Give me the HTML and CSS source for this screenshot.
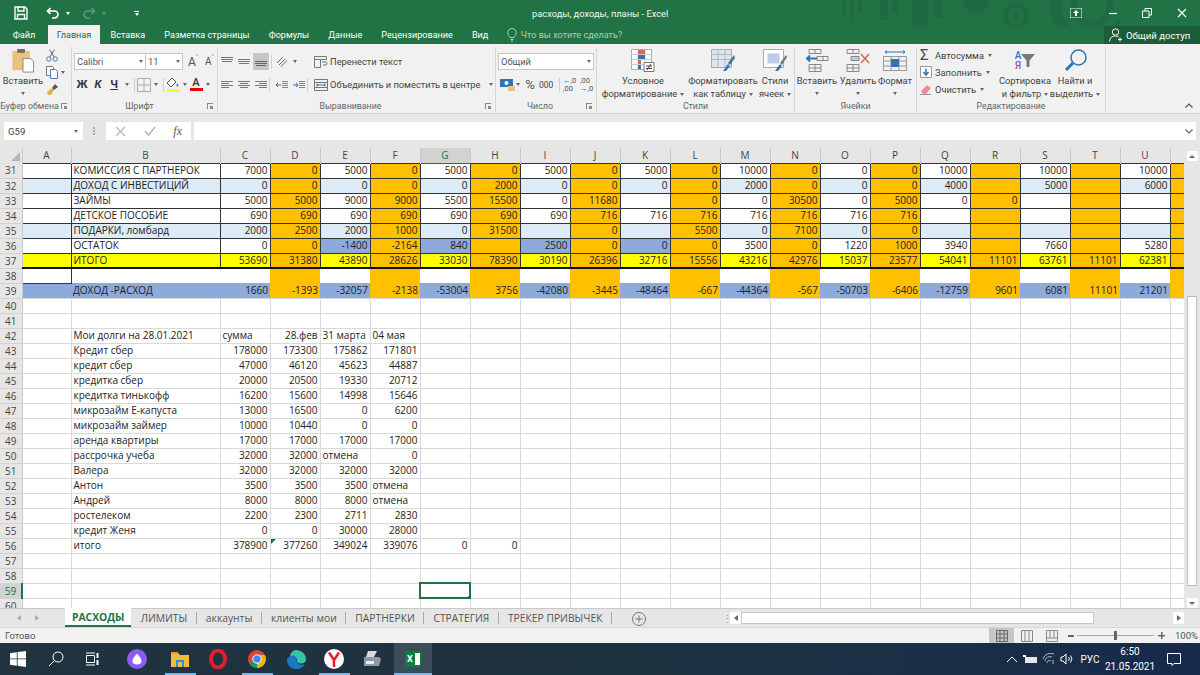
FILE: index.html
```html
<!DOCTYPE html>
<html lang="ru">
<head>
<meta charset="utf-8">
<title>расходы, доходы, планы - Excel</title>
<link rel="stylesheet" href="styles.css">
</head>
<body>
<div class="app">

<header class="titlebar">
  <svg class="pattern" width="290" height="44" viewBox="0 0 290 44" fill="#1f6a41">
    <rect x="12" width="3" height="16"/><rect x="20" width="3" height="22"/><rect x="28" width="3" height="12"/>
    <rect x="50" width="8" height="20"/><rect x="62" width="6" height="14"/><rect x="82" width="16" height="29"/>
    <rect x="104" width="8" height="18"/><circle cx="146" cy="0" r="13"/>
    <circle cx="186" cy="16" r="11" fill="none" stroke="#1f6a41" stroke-width="5"/><circle cx="186" cy="16" r="3"/>
    <circle cx="262" cy="6" r="36" fill="none" stroke="#1f6a41" stroke-width="12"/>
    <circle cx="262" cy="6" r="18" fill="none" stroke="#1f6a41" stroke-width="6"/>
  </svg>
  <div class="qat">
    <svg class="q-save" width="14" height="14" viewBox="0 0 14 14" fill="none" stroke="#fff" stroke-width="1.4"><path d="M1 1h10l2 2v10H1zM4 1v4h6V1M3.500 13V8.500h7V13"/></svg>
    <svg class="q-undo" width="14" height="12" viewBox="0 0 14 12" fill="none" stroke="#fff" stroke-width="1.700"><path d="M4.500 1 1.500 4l3 3M2 4h6.500a3.500 3.500 0 0 1 0 7H6"/></svg>
    <i class="caret white"></i>
    <svg class="q-redo" width="14" height="12" viewBox="0 0 14 12" fill="none" stroke="#5b9a78" stroke-width="1.700"><path d="M9.500 1l3 3-3 3M12 4H5.500a3.500 3.500 0 0 0 0 7H8"/></svg>
    <i class="caret dim"></i>
    <span class="q-more"><i class="bar"></i><i class="caret white"></i></span>
  </div>
  <div class="title">расходы, доходы, планы - Excel</div>
  <div class="winctl">
    <svg width="12" height="10" viewBox="0 0 12 10"><path d="M0 0h12v10H0z" fill="none" stroke="#fff"/><path d="M6 2 3 5h2v3h2V5h2z" fill="#fff"/></svg>
    <svg width="10" height="10" viewBox="0 0 10 10"><path d="M2 5.500h8" stroke="#fff" stroke-width="1.200"/></svg>
    <svg width="10" height="10" viewBox="0 0 10 10" fill="none" stroke="#fff"><path d="M.5 3h6.500v6.500H.5zM3 3V.5h6.500V7H7"/></svg>
    <svg width="10" height="10" viewBox="0 0 10 10" stroke="#fff" stroke-width="1.200"><path d="M1 1l8 8M9 1 1 9"/></svg>
  </div>
</header>

<nav class="tabs">
  <a class="tab file">Файл</a>
  <a class="tab on">Главная</a>
  <a class="tab">Вставка</a>
  <a class="tab">Разметка страницы</a>
  <a class="tab">Формулы</a>
  <a class="tab">Данные</a>
  <a class="tab">Рецензирование</a>
  <a class="tab">Вид</a>
  <span class="tell">
    <svg width="10" height="14" viewBox="0 0 10 14" fill="none" stroke="#a9d0bb"><path d="M3 9.500C2.500 8 .700 7.500.700 4.800a4.300 4.300 0 0 1 8.600 0C9.300 7.500 7.500 8 7 9.500zM3.500 11.500h3M4 13h2"/></svg>
    Что вы хотите сделать?
  </span>
  <span class="share">
    <svg width="14" height="14" viewBox="0 0 14 14" fill="none" stroke="#fff"><circle cx="6.500" cy="4" r="3.200"/><path d="M.5 13.500C1 9.500 3 8 6.500 8c1.300 0 2.400.3 3.200.9M11 9.500v4M9 11.500h4"/></svg>
    Общий доступ
  </span>
</nav>

<section class="ribbon">

  <div class="group g-clip">
    <div class="body">
      <div class="big paste">
        <svg width="24" height="26" viewBox="0 0 24 26"><path d="M1 3h18v20H1z" fill="#e9c27f"/><path d="M6 1h8v4H6z" fill="#6d6d6d"/><path d="M12 11h8l3 3v11H12z" fill="#fff" stroke="#888"/></svg>
        <span>Вставить</span><i class="caret"></i>
      </div>
      <div class="stack">
        <svg width="12" height="13" viewBox="0 0 12 13" fill="none" stroke="#4b7fb5"><circle cx="2.800" cy="10" r="2.200"/><circle cx="9.200" cy="10" r="2.200"/><path d="M3.800 8 8.500.5M8.200 8 3.500.5" stroke="#666"/></svg>
        <span class="row1"><svg width="12" height="13" viewBox="0 0 12 13" fill="#fff" stroke="#777"><path d="M.5.5h6l1 1v8h-7z"/><path d="M4.500 3.500h5l2 2v7h-7z" stroke="#4b7fb5"/></svg><i class="caret"></i></span>
        <svg width="13" height="12" viewBox="0 0 13 12"><path d="M6 5 9 1l3 3-4 3z" fill="#555"/><path d="M1 9l5-4 2 2-3 5H2z" fill="#e2b04a"/></svg>
      </div>
    </div>
    <div class="label lp">Буфер обмена</div>
    <i class="launch"></i>
  </div>

  <div class="group g-font">
    <div class="rows">
      <div class="row">
        <span class="combo c-name">Calibri<i class="caret"></i></span>
        <span class="combo c-size">11<i class="caret"></i></span>
        <span class="grow">A<sup>˄</sup></span>
        <span class="grow small">A<sup>˅</sup></span>
      </div>
      <div class="row r-style">
        <b class="bi">Ж</b><b class="bi it">К</b><b class="bi un">Ч</b><i class="caret"></i>
        <i class="sep"></i>
        <svg width="14" height="14" viewBox="0 0 14 14" fill="none" stroke="#aaa"><path d="M.5.5h13v13H.5zM7 .5v13M.5 7h13"/></svg><i class="caret"></i>
        <i class="sep"></i>
        <span class="fillbtn"><svg width="14" height="10" viewBox="0 0 14 10"><path d="M6 0 1 5l4 4 5-5z" fill="#fff" stroke="#555"/><path d="M11 5c1 1.500 2 2.500 1 3.500s-2-.5-1-3.500z" fill="#4b7fb5"/></svg><i class="sw y"></i></span><i class="caret"></i>
        <span class="fillbtn fc"><b>A</b><i class="sw r"></i></span><i class="caret"></i>
      </div>
    </div>
    <div class="label lp">Шрифт</div>
    <i class="launch"></i>
  </div>

  <div class="group g-align">
    <div class="body">
      <div class="rows">
        <div class="row">
          <svg class="al" width="12" height="10" viewBox="0 0 12 10" stroke="#777"><path d="M0 .5h12M0 2.500h12M1 4.500h10"/></svg>
          <svg class="al" width="12" height="10" viewBox="0 0 12 10" stroke="#777"><path d="M0 2.500h12M0 4.500h12M1 6.500h10"/></svg>
          <span class="al-on"><svg width="12" height="10" viewBox="0 0 12 10" stroke="#666"><path d="M0 4.500h12M0 6.500h12M1 8.500h10"/></svg></span>
          <i class="sep"></i>
          <svg width="12" height="11" viewBox="0 0 12 11" fill="none" stroke="#666"><path d="M1 7 7 1M3 9l6-6M5 10.500l6-6"/></svg><i class="caret"></i>
        </div>
        <div class="row">
          <svg class="al" width="12" height="10" viewBox="0 0 12 10" stroke="#777"><path d="M0 1.500h12M0 3.500h8M0 5.500h12M0 7.500h8"/></svg>
          <svg class="al" width="12" height="10" viewBox="0 0 12 10" stroke="#777"><path d="M0 1.500h12M2 3.500h8M0 5.500h12M2 7.500h8"/></svg>
          <svg class="al" width="12" height="10" viewBox="0 0 12 10" stroke="#777"><path d="M0 1.500h12M4 3.500h8M0 5.500h12M4 7.500h8"/></svg>
          <i class="sep"></i>
          <svg class="in" width="12" height="10" viewBox="0 0 12 10"><path d="M5 5h-5M2 3 0 5l2 2" stroke="#2f74b5" fill="none"/><path d="M6 1.500h6M6 3.500h6M6 5.500h6M6 7.500h6" stroke="#888"/></svg>
          <svg width="12" height="10" viewBox="0 0 12 10"><path d="M0 5h5M3 3l2 2-2 2" stroke="#2f74b5" fill="none"/><path d="M6 1.500h6M6 3.500h6M6 5.500h6M6 7.500h6" stroke="#888"/></svg>
          <i class="sep"></i>
        </div>
      </div>
      <div class="rows wraps">
        <div class="row"><svg width="14" height="12" viewBox="0 0 14 12" fill="none" stroke="#777"><path d="M.5.5h12v3H.5zM.5 3.500v8h6v-8"/><path d="M8 6h3.500a1.500 1.500 0 0 1 0 3H9" stroke="#2f74b5"/></svg>Перенести текст</div>
        <div class="row"><svg width="14" height="12" viewBox="0 0 14 12" fill="none" stroke="#777"><path d="M.5.5h13v11H.5zM.5 3.500h13M.5 8.500h13"/><path d="M2.500 6h9M4 4.800 2.500 6 4 7.200M10 4.800 11.500 6 10 7.200" stroke="#2f74b5"/></svg>Объединить и поместить в центре<i class="caret"></i></div>
      </div>
    </div>
    <div class="label lp">Выравнивание</div>
    <i class="launch"></i>
  </div>

  <div class="group g-num">
    <div class="rows">
      <div class="row"><span class="combo c-fmt">Общий<i class="caret"></i></span></div>
      <div class="row r-num">
        <svg width="15" height="12" viewBox="0 0 15 12"><path d="M0 0h13v8H0z" fill="#2f74b5"/><circle cx="6.500" cy="4" r="2" fill="#fff"/><path d="M8 7h7v5H8z" fill="#e9c27f"/></svg><i class="caret"></i>
        <span class="pct">%</span><span class="k">000</span><i class="sep"></i>
        <span class="dec"><i>←</i>,0<br>,00</span><span class="dec">,00<br><i>→</i>,0</span>
      </div>
    </div>
    <div class="label lp">Число</div>
    <i class="launch"></i>
  </div>

  <div class="group g-styles">
    <div class="body">
      <div class="big w-cond">
        <svg width="24" height="23" viewBox="0 0 24 23"><path d="M.5.500h20v20H.5z" fill="#fff" stroke="#aaa"/><path d="M7 .5v20M14 .5v20M.5 5.500h20M.5 10.500h20M.5 15.500h20" stroke="#ccc"/><path d="M7 1h7v4H7z" fill="#d9694a"/><path d="M7 6h7v4H7z" fill="#2f74b5"/><path d="M7 11h3v4H7z" fill="#d9694a"/><path d="M7 16h3v4H7z" fill="#2f74b5"/><path d="M13 13.500h10v9H13z" fill="#fff" stroke="#777"/><path d="M15 17h6M15 19.500h6M16 21l4-6" stroke="#444" fill="none"/></svg>
        <span>Условное<br>форматирование<i class="caret"></i></span>
      </div>
      <div class="big w-tbl">
        <svg width="24" height="23" viewBox="0 0 24 23"><path d="M.5.500h20v18H.5z" fill="#dbe6f3" stroke="#aaa"/><path d="M7 .5v18M14 .5v18M.5 5.500h20M.5 10.500h20" stroke="#b5b5b5"/><path d="M12 22l5-7 2 2-4 5zM17 14l5-6 2 1-5 7z" fill="#2f74b5"/><path d="M19 11l4-5 1 2-3 4z" fill="#777"/></svg>
        <span>Форматировать<br>как таблицу<i class="caret"></i></span>
      </div>
      <div class="big w-cell">
        <svg width="24" height="23" viewBox="0 0 24 23"><path d="M.5.500h20v18H.5z" fill="#fff" stroke="#aaa"/><path d="M4.500 4.500h12v10h-12z" fill="#b9cde6"/><path d="M12 22l5-7 2 2-4 5z" fill="#2f74b5"/><path d="M17 14l6-8 1 2-5 8z" fill="#777"/></svg>
        <span>Стили<br>ячеек<i class="caret"></i></span>
      </div>
    </div>
    <div class="label">Стили</div>
  </div>

  <div class="group g-cells">
    <div class="body">
      <div class="big w-ins">
        <svg width="24" height="23" viewBox="0 0 24 23" fill="none" stroke="#888"><path d="M4 .5h12v4H4zM10 .5v4M4 15.500h12v7H4zM10 15.500v7M4 19h12M12 7.500h11v4H12zM18 7.500v4"/><path d="M12 9.500H2M5 6.500l-3 3 3 3" stroke="#2f74b5" stroke-width="2"/></svg>
        <span>Вставить</span><i class="caret"></i>
      </div>
      <div class="big w-del">
        <svg width="24" height="23" viewBox="0 0 24 23" fill="none" stroke="#888"><path d="M1 .5h12v4H1zM7 .5v4M1 15.500h12v7H1zM7 15.500v7M1 19h12"/><path d="M5 7.500h8v4H5z" fill="#b9cde6"/><path d="M15 5l8 9M23 5l-8 9" stroke="#d9694a" stroke-width="1.500"/></svg>
        <span>Удалить</span><i class="caret"></i>
      </div>
      <div class="big w-fmt">
        <svg width="24" height="25" viewBox="0 0 24 25" fill="none" stroke="#999"><path d="M2 4h20M2 4l2-1.500M2 4l2 1.500M22 4l-2-1.500M22 4l-2 1.500" stroke="#2f74b5"/><path d="M.5 8.500h23v14H.5zM8 8.500v14M16 8.500v14M.5 13h23M.5 18h23"/><path d="M8 11h8v8H8z" fill="#2f74b5" stroke="none"/></svg>
        <span>Формат</span><i class="caret"></i>
      </div>
    </div>
    <div class="label">Ячейки</div>
  </div>

  <div class="group g-edit">
    <div class="body">
      <div class="stack edits">
        <span class="row1"><b class="sig">Σ</b>Автосумма<i class="caret"></i></span>
        <span class="row1"><svg width="12" height="12" viewBox="0 0 12 12"><path d="M.5.500h11v11H.5z" fill="#fff" stroke="#999"/><path d="M6 2.500v6M3.500 6 6 9l2.500-3" fill="none" stroke="#2f74b5" stroke-width="1.500"/></svg>Заполнить<i class="caret"></i></span>
        <span class="row1"><svg width="12" height="11" viewBox="0 0 12 11"><path d="M1 7l6-6 4 3-5 6H3z" fill="#ee8a99"/><path d="M0 10.500h11" stroke="#999"/></svg>Очистить<i class="caret"></i></span>
      </div>
      <div class="big w-sort">
        <span class="sorticon"><em class="az">А<br><u>Я</u></em><svg width="14" height="13" viewBox="0 0 14 13"><path d="M0 0h14L8.500 6.500V13h-3V6.500z" fill="#777"/></svg></span>
        <span>Сортировка<br>и фильтр<i class="caret"></i></span>
      </div>
      <div class="big w-find">
        <svg width="23" height="23" viewBox="0 0 23 23" fill="none" stroke="#2f74b5"><circle cx="14.500" cy="8.500" r="7.500" stroke-width="1.500"/><path d="M9 14 2 21" stroke-width="3"/></svg>
        <span>Найти и<br>выделить<i class="caret"></i></span>
      </div>
    </div>
    <div class="label">Редактирование</div>
  </div>

  <svg class="collapse" width="8" height="5" viewBox="0 0 8 5" fill="none" stroke="#555" stroke-width="1.200"><path d="M.5 4.500 4 1l3.500 3.500"/></svg>
</section>

<div class="fbar">
  <div class="namebox">G59<i class="caret"></i></div>
  <div class="grip"></div>
  <div class="fxbox">
    <svg width="11" height="11" viewBox="0 0 11 11" stroke="#b5b5b5" stroke-width="1.200"><path d="M1 1l9 9M10 1l-9 9"/></svg>
    <svg width="12" height="10" viewBox="0 0 12 10" fill="none" stroke="#b5b5b5" stroke-width="1.500"><path d="M1 5l3.500 4L11 1"/></svg>
    <em>fx</em>
  </div>
  <div class="formula"><svg width="8" height="5" viewBox="0 0 8 5" fill="none" stroke="#666" stroke-width="1.200"><path d="M.5.500 4 4 7.500.5"/></svg></div>
</div>

<div class="sheet">
<div class="gridwrap">
<table class="grid">
<colgroup><col class="c-h"><col class="c-a"><col class="c-b"><col span="19" class="c-n"><col class="c-v"></colgroup>
<thead><tr><th class="corner"></th><th>A</th><th>B</th><th>C</th><th>D</th><th>E</th><th>F</th><th class="act">G</th><th>H</th><th>I</th><th>J</th><th>K</th><th>L</th><th>M</th><th>N</th><th>O</th><th>P</th><th>Q</th><th>R</th><th>S</th><th>T</th><th>U</th><th></th></tr></thead>
<tbody>
<tr class="d"><th>31</th><td></td><td class="l">КОМИССИЯ С ПАРТНЕРОК</td><td>7000</td><td>0</td><td>5000</td><td>0</td><td>5000</td><td>0</td><td>5000</td><td>0</td><td>5000</td><td>0</td><td>10000</td><td>0</td><td>0</td><td>0</td><td>10000</td><td></td><td>10000</td><td></td><td>10000</td><td></td></tr>
<tr class="d lb"><th>32</th><td></td><td class="l">ДОХОД С ИНВЕСТИЦИЙ</td><td>0</td><td>0</td><td>0</td><td>0</td><td>0</td><td>2000</td><td>0</td><td>0</td><td>0</td><td>0</td><td>2000</td><td>0</td><td>0</td><td>0</td><td>4000</td><td></td><td>5000</td><td></td><td>6000</td><td></td></tr>
<tr class="d"><th>33</th><td></td><td class="l">ЗАЙМЫ</td><td>5000</td><td>5000</td><td>9000</td><td>9000</td><td>5500</td><td>15500</td><td>0</td><td>11680</td><td></td><td>0</td><td>0</td><td>30500</td><td>0</td><td>5000</td><td>0</td><td>0</td><td></td><td></td><td></td><td></td></tr>
<tr class="d"><th>34</th><td></td><td class="l">ДЕТСКОЕ ПОСОБИЕ</td><td>690</td><td>690</td><td>690</td><td>690</td><td>690</td><td>690</td><td>690</td><td>716</td><td>716</td><td>716</td><td>716</td><td>716</td><td>716</td><td>716</td><td></td><td></td><td></td><td></td><td></td><td></td></tr>
<tr class="d lb"><th>35</th><td></td><td class="l">ПОДАРКИ, ломбард</td><td>2000</td><td>2500</td><td>2000</td><td>1000</td><td>0</td><td>31500</td><td></td><td>0</td><td></td><td>5500</td><td>0</td><td>7100</td><td>0</td><td>0</td><td></td><td></td><td></td><td></td><td></td><td></td></tr>
<tr class="d"><th>36</th><td></td><td class="l">ОСТАТОК</td><td>0</td><td>0</td><td class="neg">-1400</td><td>-2164</td><td class="neg">840</td><td></td><td class="neg">2500</td><td>0</td><td class="neg">0</td><td>0</td><td>3500</td><td>0</td><td>1220</td><td>1000</td><td>3940</td><td></td><td>7660</td><td></td><td>5280</td><td></td></tr>
<tr class="d tot"><th>37</th><td></td><td class="l">ИТОГО</td><td>53690</td><td>31380</td><td>43890</td><td>28626</td><td>33030</td><td>78390</td><td>30190</td><td>26396</td><td>32716</td><td>15556</td><td>43216</td><td>42976</td><td>15037</td><td>23577</td><td>54041</td><td>11101</td><td>63761</td><td>11101</td><td>62381</td><td></td></tr>
<tr class="gap"><th>38</th><td class="ac"></td><td></td><td></td><td></td><td></td><td></td><td></td><td></td><td></td><td></td><td></td><td></td><td></td><td></td><td></td><td></td><td></td><td></td><td></td><td></td><td></td><td></td></tr>
<tr class="gap diff"><th>39</th><td></td><td class="l">ДОХОД -РАСХОД</td><td>1660</td><td>-1393</td><td>-32057</td><td>-2138</td><td>-53004</td><td>3756</td><td>-42080</td><td>-3445</td><td>-48464</td><td>-667</td><td>-44364</td><td>-567</td><td>-50703</td><td>-6406</td><td>-12759</td><td>9601</td><td>6081</td><td>11101</td><td>21201</td><td></td></tr>
<tr><th>40</th><td></td><td></td><td></td><td></td><td></td><td></td><td></td><td></td><td></td><td></td><td></td><td></td><td></td><td></td><td></td><td></td><td></td><td></td><td></td><td></td><td></td><td></td></tr>
<tr><th>41</th><td></td><td></td><td></td><td></td><td></td><td></td><td></td><td></td><td></td><td></td><td></td><td></td><td></td><td></td><td></td><td></td><td></td><td></td><td></td><td></td><td></td><td></td></tr>
<tr><th>42</th><td></td><td class="l">Мои долги на 28.01.2021</td><td class="l">сумма</td><td>28.фев</td><td class="l">31 марта</td><td class="l">04 мая</td><td></td><td></td><td></td><td></td><td></td><td></td><td></td><td></td><td></td><td></td><td></td><td></td><td></td><td></td><td></td><td></td></tr>
<tr><th>43</th><td></td><td class="l">Кредит сбер</td><td>178000</td><td>173300</td><td>175862</td><td>171801</td><td></td><td></td><td></td><td></td><td></td><td></td><td></td><td></td><td></td><td></td><td></td><td></td><td></td><td></td><td></td><td></td></tr>
<tr><th>44</th><td></td><td class="l">кредит сбер</td><td>47000</td><td>46120</td><td>45623</td><td>44887</td><td></td><td></td><td></td><td></td><td></td><td></td><td></td><td></td><td></td><td></td><td></td><td></td><td></td><td></td><td></td><td></td></tr>
<tr><th>45</th><td></td><td class="l">кредитка сбер</td><td>20000</td><td>20500</td><td>19330</td><td>20712</td><td></td><td></td><td></td><td></td><td></td><td></td><td></td><td></td><td></td><td></td><td></td><td></td><td></td><td></td><td></td><td></td></tr>
<tr><th>46</th><td></td><td class="l">кредитка тинькофф</td><td>16200</td><td>15600</td><td>14998</td><td>15646</td><td></td><td></td><td></td><td></td><td></td><td></td><td></td><td></td><td></td><td></td><td></td><td></td><td></td><td></td><td></td><td></td></tr>
<tr><th>47</th><td></td><td class="l">микрозайм Е-капуста</td><td>13000</td><td>16500</td><td>0</td><td>6200</td><td></td><td></td><td></td><td></td><td></td><td></td><td></td><td></td><td></td><td></td><td></td><td></td><td></td><td></td><td></td><td></td></tr>
<tr><th>48</th><td></td><td class="l">микрозайм займер</td><td>10000</td><td>10440</td><td>0</td><td>0</td><td></td><td></td><td></td><td></td><td></td><td></td><td></td><td></td><td></td><td></td><td></td><td></td><td></td><td></td><td></td><td></td></tr>
<tr><th>49</th><td></td><td class="l">аренда квартиры</td><td>17000</td><td>17000</td><td>17000</td><td>17000</td><td></td><td></td><td></td><td></td><td></td><td></td><td></td><td></td><td></td><td></td><td></td><td></td><td></td><td></td><td></td><td></td></tr>
<tr><th>50</th><td></td><td class="l">рассрочка учеба</td><td>32000</td><td>32000</td><td class="l">отмена</td><td>0</td><td></td><td></td><td></td><td></td><td></td><td></td><td></td><td></td><td></td><td></td><td></td><td></td><td></td><td></td><td></td><td></td></tr>
<tr><th>51</th><td></td><td class="l">Валера</td><td>32000</td><td>32000</td><td>32000</td><td>32000</td><td></td><td></td><td></td><td></td><td></td><td></td><td></td><td></td><td></td><td></td><td></td><td></td><td></td><td></td><td></td><td></td></tr>
<tr><th>52</th><td></td><td class="l">Антон</td><td>3500</td><td>3500</td><td>3500</td><td class="l">отмена</td><td></td><td></td><td></td><td></td><td></td><td></td><td></td><td></td><td></td><td></td><td></td><td></td><td></td><td></td><td></td><td></td></tr>
<tr><th>53</th><td></td><td class="l">Андрей</td><td>8000</td><td>8000</td><td>8000</td><td class="l">отмена</td><td></td><td></td><td></td><td></td><td></td><td></td><td></td><td></td><td></td><td></td><td></td><td></td><td></td><td></td><td></td><td></td></tr>
<tr><th>54</th><td></td><td class="l">ростелеком</td><td>2200</td><td>2300</td><td>2711</td><td>2830</td><td></td><td></td><td></td><td></td><td></td><td></td><td></td><td></td><td></td><td></td><td></td><td></td><td></td><td></td><td></td><td></td></tr>
<tr><th>55</th><td></td><td class="l">кредит Женя</td><td>0</td><td>0</td><td>30000</td><td>28000</td><td></td><td></td><td></td><td></td><td></td><td></td><td></td><td></td><td></td><td></td><td></td><td></td><td></td><td></td><td></td><td></td></tr>
<tr><th>56</th><td></td><td class="l">итого</td><td>378900</td><td class="warn">377260</td><td>349024</td><td>339076</td><td>0</td><td>0</td><td></td><td></td><td></td><td></td><td></td><td></td><td></td><td></td><td></td><td></td><td></td><td></td><td></td><td></td></tr>
<tr><th>57</th><td></td><td></td><td></td><td></td><td></td><td></td><td></td><td></td><td></td><td></td><td></td><td></td><td></td><td></td><td></td><td></td><td></td><td></td><td></td><td></td><td></td><td></td></tr>
<tr><th>58</th><td></td><td></td><td></td><td></td><td></td><td></td><td></td><td></td><td></td><td></td><td></td><td></td><td></td><td></td><td></td><td></td><td></td><td></td><td></td><td></td><td></td><td></td></tr>
<tr><th class="act-r">59</th><td></td><td></td><td></td><td></td><td></td><td></td><td class="sel"></td><td></td><td></td><td></td><td></td><td></td><td></td><td></td><td></td><td></td><td></td><td></td><td></td><td></td><td></td><td></td></tr>
<tr><th>60</th><td></td><td></td><td></td><td></td><td></td><td></td><td></td><td></td><td></td><td></td><td></td><td></td><td></td><td></td><td></td><td></td><td></td><td></td><td></td><td></td><td></td><td></td></tr>
</tbody>
</table>
</div>
<div class="vscroll">
  <span class="sbtn"><i class="up"></i></span>
  <span class="thumb"></span>
  <span class="sbtn"><i class="down"></i></span>
</div>
</div>

<div class="sheettabs">
  <span class="nav"><i class="tl"></i><i class="tr"></i></span>
  <a class="stab on">РАСХОДЫ</a>
  <a class="stab">ЛИМИТЫ</a>
  <a class="stab">аккаунты</a>
  <a class="stab">клиенты мои</a>
  <a class="stab">ПАРТНЕРКИ</a>
  <a class="stab">СТРАТЕГИЯ</a>
  <a class="stab">ТРЕКЕР ПРИВЫЧЕК</a>
  <svg class="addsheet" width="14" height="14" viewBox="0 0 14 14" fill="none" stroke="#777"><circle cx="7" cy="7" r="6.500"/><path d="M7 3.500v7M3.500 7h7"/></svg>
  <span class="hdots">⋮</span>
  <span class="hscroll">
    <span class="hbtn"><i class="tl"></i></span>
    <span class="hthumb"></span>
    <span class="hbtn"><i class="tr"></i></span>
  </span>
</div>

<div class="status">
  <span class="ready">Готово</span>
  <span class="views">
    <span class="view on"><svg width="12" height="12" viewBox="0 0 12 12" fill="none" stroke="#666"><path d="M.5.500h11v11H.5zM4 .5v11M8 .5v11M.5 4h11M.5 8h11"/></svg></span>
    <span class="view"><svg width="12" height="12" viewBox="0 0 12 12" fill="none" stroke="#888"><path d="M.5.500h11v11H.5zM4 .5v11M8 .5v11"/></svg></span>
    <span class="view"><svg width="12" height="12" viewBox="0 0 12 12" fill="none" stroke="#888"><path d="M.5.500h11v11H.5zM.5 8h11M4 .5v7.500M8 .5v7.500"/></svg></span>
  </span>
  <span class="zoom">
    <i class="zm"></i>
    <span class="slider"><i class="knob"></i></span>
    <i class="zp"></i>
    <span class="pctz">100%</span>
  </span>
</div>

<footer class="taskbar">
  <span class="ti t-win"><svg width="16" height="16" viewBox="0 0 16 16" fill="#fff"><path d="M0 2.200 6.800 1.200v6.300H0zM7.600 1.100 16 0v7.500H7.600zM0 8.300h6.800v6.400L0 13.800zM7.600 8.300H16V16l-8.400-1.200z"/></svg></span>
  <span class="ti t-search"><svg width="16" height="16" viewBox="0 0 16 16" fill="none" stroke="#fff"><circle cx="10" cy="6" r="5"/><path d="M6.300 9.700 1 15"/></svg></span>
  <span class="ti t-view"><svg width="15" height="14" viewBox="0 0 15 14" fill="none" stroke="#fff"><path d="M1.500 3.500h8v7h-8zM1 1h9M1 13h9"/><path d="M12.500 1v5M12.500 8v5" stroke-width="2"/></svg></span>
  <span class="ti t-alice"><svg width="20" height="20" viewBox="0 0 20 20"><circle cx="10" cy="10" r="10" fill="#8b5bf5"/><path d="M10 4.500c3 3 4.500 5.500 4.500 8 0 2-2 3-4.500 3s-4.500-1-4.500-3c0-2.500 1.500-5 4.500-8z" fill="#fff"/></svg></span>
  <span class="ti open t-folder"><svg width="18" height="17" viewBox="0 0 18 17"><path d="M0 2h7l2 2h9v12H0z" fill="#f0bd3d"/><path d="M0 1h7v2H0z" fill="#d9a02c"/><path d="M5 9h8v7H5z" fill="#2f8fd8"/><path d="M7 11h4v5H7z" fill="#f0bd3d"/></svg></span>
  <span class="ti"><svg width="18" height="20" viewBox="0 0 18 20"><ellipse cx="9" cy="10" rx="7" ry="8.500" fill="none" stroke="#e31e26" stroke-width="4"/></svg></span>
  <span class="ti open t-next"><svg width="18" height="18" viewBox="0 0 18 18"><circle cx="9" cy="9" r="9" fill="#db4437"/><path d="M9 9 1.200 13.500A9 9 0 0 0 9 18a9 9 0 0 0 6-2.300z" fill="#0f9d58"/><path d="M9 5h7.900A9 9 0 0 1 9 18z" fill="#f4b400"/><circle cx="9" cy="9" r="4.200" fill="#4285f4" stroke="#fff"/></svg></span>
  <span class="ti t-next"><svg width="19" height="19" viewBox="0 0 19 19"><path d="M9.500 0a9.500 9.500 0 0 1 9.500 9.500c0 3-3 4.500-6 4-3-.5-3-2.500-3-3.500 0-3-4-5-7-3.500C3.500 2.500 6 0 9.500 0z" fill="#34c4a5"/><path d="M2.500 6.500C6 4 10 6.500 9.500 10c-.4 3 3 6 8.500 4A9.500 9.500 0 0 1 9 19C3.500 19 0 14.500 0 10c0-1 .5-2.500 2.500-3.500z" fill="#1d76c8"/></svg></span>
  <span class="ti open"><svg width="20" height="20" viewBox="0 0 20 20"><circle cx="10" cy="10" r="10" fill="#fff"/><path d="M5 3.500 10 11l5-7.500M10 11v7" fill="none" stroke="#e31e26" stroke-width="2.500"/></svg></span>
  <span class="ti"><svg width="18" height="17" viewBox="0 0 18 17"><path d="M5 0h9l-3 6H3z" fill="#d9d9d9"/><path d="M1 6h15l2 2-2 7H1z" fill="#8d9aa3"/><path d="M3 10h8v3H3z" fill="#e8ecef"/></svg></span>
  <span class="ti open active"><span class="xl"><b>X</b><i></i></span></span>
  <span class="tray">
    <svg width="12" height="7" viewBox="0 0 12 7" fill="none" stroke="#fff"><path d="M1 6 6 1l5 5"/></svg>
    <svg width="14" height="9" viewBox="0 0 14 9"><path d="M0 0h3v2H0z" fill="#fff"/><path d="M2 2h12v6H2z" fill="#e6e6e6"/></svg>
    <svg width="13" height="12" viewBox="0 0 13 12" fill="none" stroke="#b7bdc2"><path d="M1 6a8 8 0 0 1 11-5M3 8a5 5 0 0 1 7-4M5 10a2.500 2.500 0 0 1 4-2M11 11V7"/></svg>
    <svg width="14" height="12" viewBox="0 0 14 12" fill="none" stroke="#fff"><path d="M1 4h2l3-3v10L3 8H1zM8.500 4a3 3 0 0 1 0 4M10.500 2.500a5.500 5.500 0 0 1 0 7"/></svg>
    <span class="lang">РУС</span>
    <span class="clock">6:50<br>21.05.2021</span>
    <svg class="note" width="14" height="13" viewBox="0 0 14 13" fill="none" stroke="#fff"><path d="M.5.500h13v10H7l-2 2v-2H.5z"/></svg>
  </span>
</footer>

</div>
</body>
</html>
```
FILE: styles.css
```css
*{box-sizing:border-box}
html,body{margin:0;padding:0}
body{width:1200px;height:675px;overflow:hidden;background:#e6e6e6;font-family:Roboto,"Noto Sans",sans-serif;color:#444}
i{font-style:normal}
svg{flex:none}
.app{width:1200px;height:675px;display:flex;flex-direction:column}

.caret{display:inline-block;width:0;height:0;border-left:2.5px solid transparent;border-right:2.5px solid transparent;border-top:3px solid #666;flex:none}
.caret.white{border-top-color:#fff}
.caret.dim{border-top-color:#5b9a78}

.titlebar{height:26px;flex:none;background:#217346;color:#fff;display:flex;align-items:center;position:relative}
.pattern{position:absolute;left:830px;top:0}
.qat{display:flex;align-items:center;width:480px;padding-left:14px;position:relative}
.q-undo{margin-left:18px}
.qat .caret{margin-left:6px}
.q-redo{margin-left:12px}
.q-more{display:flex;flex-direction:column;align-items:center;gap:1px;margin-left:28px}
.q-more .bar{width:5px;height:1px;background:#fff}
.q-more .caret{margin:0}
.title{position:relative;font-size:9.3px;margin-left:52px;flex:1;color:#f1f8f4;white-space:nowrap}
.winctl{position:relative;display:flex;align-items:center;gap:25px;padding-right:13px}

.tabs{height:18px;flex:none;background:#217346;display:flex;align-items:stretch;position:relative;font-size:9.1px;color:#fff}
.tab{display:flex;align-items:center;padding:0 9.5px;white-space:nowrap}
.tab.file{width:48px;justify-content:center;padding:0}
.tab.on{width:52px;justify-content:center;padding:0;background:#f1f1f1;color:#217346;margin-top:-1px;margin-right:1px}
.tell{margin-left:9px;display:flex;align-items:center;gap:4px;color:#a9d0bb;white-space:nowrap}
.share{position:absolute;right:0;top:0;width:96px;height:18px;background:#1c5d39;display:flex;align-items:center;gap:3px;padding-left:5px;white-space:nowrap;font-size:9.6px}

.ribbon{height:70px;flex:none;background:#f1f1f1;display:flex;align-items:stretch;padding-top:3px;border-bottom:1px solid #d2d2d2;position:relative;font-size:9.3px;color:#444}
.group{display:flex;flex-direction:column;border-right:1px solid #d6d6d6;position:relative;margin-bottom:1px;flex:none}
.group .body{flex:1;display:flex;min-height:0}
.label{height:12px;line-height:12px;text-align:center;font-size:8.8px;color:#666;white-space:nowrap}
.label.lp{padding-right:12px}
.launch{position:absolute;right:4px;bottom:3px;width:6px;height:6px;border-left:1px solid #888;border-top:1px solid #888}
.launch::after{content:"";position:absolute;right:0;bottom:0;width:3px;height:3px;background:#888}
.rows{flex:1;display:flex;flex-direction:column;gap:6px;padding-top:6px;min-height:0}
.row{display:flex;align-items:center;height:17px;white-space:nowrap}
.sep{display:block;width:1px;height:14px;background:#d0d0d0;flex:none}
.big{display:flex;flex-direction:column;align-items:center;line-height:13px;white-space:nowrap;flex:none;text-align:center}
.big>svg,.big>.sorticon{height:25px;flex:none;margin-top:1px;margin-bottom:1px}
.big .caret{margin-left:3px;vertical-align:middle}
.big>.caret{margin:5px 0 0}
.stack{display:flex;flex-direction:column;gap:4px;padding-top:2px;align-items:flex-start}
.row1{display:flex;align-items:center;gap:3px;height:13px}

.g-clip{width:72px}
.paste{width:46px}

.g-font{width:146px;padding-left:2px}
.combo{display:flex;align-items:center;justify-content:space-between;height:17px;background:#fff;border:1px solid #c6c6c6;padding:0 2px;color:#555;flex:none}
.c-name{width:72px}
.c-size{width:37px;border-left:none}
.grow{font-size:12px;margin-left:5px;width:14px;color:#555;flex:none}
.grow sup{font-size:8px;color:#2f74b5;line-height:0}
.grow.small{font-size:10px;margin-left:3px}
.bi{width:16px;text-align:center;font-size:11px;color:#333;flex:none}
.bi.it{font-style:italic}
.bi.un{text-decoration:underline}
.r-style .caret{margin:0 5px 0 3px}
.r-style svg{margin-left:2px}
.r-style .fillbtn svg{margin:0}
.fillbtn{display:flex;flex-direction:column;width:14px;align-items:center;flex:none;margin-left:2px}
.r-style .fillbtn+.caret{margin-right:2px}
.fc{margin-left:0}
.sw{display:block;height:3px;width:13px}
.sw.y{background:#ff0;margin-top:1px}
.sw.r{background:#e00}
.fc b{font-size:11px;line-height:10px;color:#333;font-weight:500}

.g-align{width:278px}
.g-align .rows{flex:none;width:93px;padding-left:3px}
.g-align .row{gap:5px}
.al-on{background:#c6c6c6;width:16px;height:17px;display:flex;align-items:center;justify-content:center;margin-left:-2px}
.g-align .sep{margin:0 -1px 0 -3px}
.in{margin-left:2px}
.g-align .wraps{flex:1;width:auto;padding-left:3px}
.wraps .row{gap:2px}
.wraps .caret{margin-left:6px}

.g-num{width:101px;padding:0 2px}
.c-fmt{width:96px}
.r-num{padding-left:2px}
.r-num .caret{margin:0 4px 0 1px}
.pct{font-size:13px;color:#555;width:12px;text-align:center;flex:none}
.k{font-size:8.5px;margin-left:3px;margin-right:5px;width:15px;flex:none}
.dec{font-size:7.5px;line-height:8px;margin-left:3px;color:#555;width:14px;flex:none}
.dec i{color:#2f74b5}

.g-styles{width:198px}
.w-cond{width:92px}
.w-tbl{width:68px}
.w-cell{width:36px}
.g-cells{width:122px}
.w-ins{width:44px}
.w-del{width:38px}
.w-fmt{width:36px}
.g-edit{width:189px}
.edits{width:73px;padding-left:3px;gap:1px;padding-top:0}
.edits .row1{height:16px;white-space:nowrap}
.edits .caret{margin-left:1px}
.sig{font-size:15px;color:#444;width:12px;line-height:14px;font-weight:400;flex:none}
.w-sort{width:60px;margin-left:5px}
.w-find{width:40px}
.sorticon{display:flex;align-items:center;justify-content:center}
.az{font-style:normal;font-size:10px;line-height:10px;color:#2f74b5;font-weight:500;text-align:center}
.az u{text-decoration:none;color:#8e56b5}
.collapse{position:absolute;right:7px;bottom:5px}

.fbar{height:34px;flex:none;background:#e6e6e6;display:flex;align-items:center;padding:0 4px;font-size:9.6px}
.namebox{width:79px;height:18px;background:#fff;display:flex;align-items:center;justify-content:space-between;padding:0 5px 0 4px;color:#444}
.grip{width:2px;height:8px;margin:0 10px;border-left:2px dotted #aaa}
.fxbox{width:85px;height:18px;background:#fff;display:flex;align-items:center;justify-content:space-between;padding:0 9px;margin:0 3px 0 1px}
.fxbox em{font-family:"Liberation Serif",serif;font-size:12px;color:#555}
.formula{flex:1;height:18px;background:#fff;display:flex;align-items:center;justify-content:flex-end;padding-right:3px}

.sheet{height:460px;flex:none;display:flex;background:#fff}
.gridwrap{width:1184px;height:460px;overflow:hidden;flex:none}
.grid{width:1184px;border-collapse:collapse;table-layout:fixed;font-family:"Open Sans","Noto Sans",sans-serif;font-size:10px;color:#222;background:#fff}
.c-h{width:22px}.c-a{width:49px}.c-b{width:149px}.c-n{width:50px}.c-v{width:14px}
.grid tr{height:15px}
.grid th{background:#e6e6e6;font-weight:400;color:#444;padding:0;text-align:center;font-size:10px;line-height:14px;border:1px solid #c8c8c8;border-width:0 1px 0 0;overflow:hidden}
.grid tbody th{border-bottom:1px solid #d2d2d2}
.grid td{border:1px solid #d9d9d9;padding:0 2px 0 0;text-align:right;line-height:13px;white-space:nowrap;overflow:hidden;height:15px}
.grid td.l{text-align:left;padding:0 0 0 2px}
.grid .act{background:#d2d2d2;color:#217346;border-bottom:1px solid #217346}
.grid .act-r{background:#d2d2d2;color:#217346;border-right:2px solid #217346}
.corner{position:relative}
.corner::after{content:"";position:absolute;right:2px;bottom:2px;border-left:9px solid transparent;border-bottom:9px solid #b5b5b5}
.d td{border:1px solid #333;background:#fff}
.d.lb td{background:#ddebf7}
.d.tot td{background:#ff0;border-bottom:2px solid #111}
.d td:nth-child(odd):nth-child(n+5),.d.lb td:nth-child(odd):nth-child(n+5),.d.tot td:nth-child(odd):nth-child(n+5){background:#ffc000}
.grid .d td.neg{background:#8ea9db}
.gap td{border:none}
.gap td:nth-child(odd):nth-child(n+5){background:#ffc000}
.gap .ac{border-right:1px solid #333;border-bottom:1px solid #333}
.diff td{background:#8ea9db}
.warn{position:relative}
.warn::before{content:"";position:absolute;left:0;top:0;border-top:5px solid #0b7a3e;border-right:5px solid transparent}
.sel{position:relative;outline:2px solid #217346;outline-offset:-1px}
.sel::after{content:"";position:absolute;right:-2px;bottom:-2px;width:4px;height:4px;background:#217346}

.vscroll{width:16px;flex:none;background:#e6e6e6;display:flex;flex-direction:column;align-items:center;padding-top:3px}
.sbtn{width:11px;height:10px;background:#fff;display:flex;align-items:center;justify-content:center;flex:none}
.thumb{width:10px;height:290px;background:#fff;border:1px solid #bdbdbd;margin:135px 0 12px}
.up{border-left:3px solid transparent;border-right:3px solid transparent;border-bottom:3px solid #666}
.down{border-left:3px solid transparent;border-right:3px solid transparent;border-top:3px solid #666}

.sheettabs{height:19px;flex:none;background:#e6e6e6;display:flex;align-items:stretch;font-family:"Open Sans","Noto Sans",sans-serif;font-size:10.3px;color:#555;border-top:1px solid #c8c8c8;padding-right:16px}
.nav{width:65px;display:flex;align-items:center;gap:14px;padding-left:17px;flex:none}
.tl{border-top:3px solid transparent;border-bottom:3px solid transparent;border-right:4px solid #aaa;display:block}
.tr{border-top:3px solid transparent;border-bottom:3px solid transparent;border-left:4px solid #aaa;display:block}
.stab{padding:0 9.3px;display:flex;align-items:center;white-space:nowrap;position:relative;flex:none}
.stab::after{content:"";position:absolute;right:0;top:3px;bottom:3px;width:1px;background:#aaa}
.stab.on{background:#fff;color:#217346;font-weight:700;padding:0 7px;border-bottom:2px solid #217346;margin-top:-1px}
.stab.on::after{display:none}
.addsheet{margin:3px 0 0 20px;flex:none}
.hdots{margin-left:auto;color:#999;align-self:center;font-size:11px;width:8px;flex:none}
.hscroll{width:454px;display:flex;align-items:center;flex:none}
.hbtn{width:11px;height:12px;background:#fff;display:flex;align-items:center;justify-content:center;flex:none}
.hbtn .tl{border-right-color:#666}
.hbtn .tr{border-left-color:#666}
.hthumb{width:353px;height:12px;background:#fff;border:1px solid #c8c8c8;flex:none;margin-right:79px}

.status{height:16px;flex:none;background:#f1f1f1;display:flex;align-items:stretch;font-size:9.5px;color:#555;border-top:1px solid #d6d6d6}
.ready{padding-left:5px;flex:none;width:989px;line-height:15px}
.views{display:flex;flex:none;width:76px}
.view{width:25px;display:flex;align-items:center;justify-content:center}
.view.on{background:#c6c6c6}
.zoom{display:flex;align-items:center;flex:none;padding-left:3px}
.zm{width:6px;height:2px;background:#666;margin-right:3px}
.slider{width:77px;height:1px;background:#aaa;position:relative}
.knob{position:absolute;left:37px;top:-4px;width:3px;height:9px;background:#666}
.zp{width:7px;height:7px;margin-left:4px;background:linear-gradient(#666,#666) center/7px 1.5px no-repeat,linear-gradient(#666,#666) center/1.5px 7px no-repeat}
.pctz{margin-left:10px}

.taskbar{height:32px;flex:none;background:linear-gradient(90deg,#20333f,#1d3242 60%,#172a4b);display:flex;align-items:stretch;color:#fff;font-size:10px}
.ti{width:38px;display:flex;align-items:center;justify-content:center;flex:none;position:relative}
.t-win{width:36px}
.t-search{margin-left:1px}
.t-view{margin-left:-2px}
.t-alice{margin-left:7px}
.t-folder{margin-left:5px}
.t-next{margin-left:1px}
.open::after{content:"";position:absolute;left:4px;right:3px;bottom:0;height:2px;background:#76b9ed}
.active{background:#3a4d59;margin-left:3px}
.active.open::after{left:0;right:0}
.xl{width:16px;height:16px;background:#107c41;display:flex;align-items:center;justify-content:space-between;font-size:9px;padding:0 1px 0 2px}
.xl i{width:5px;height:12px;background:#fff}
.tray{margin-left:auto;display:flex;align-items:center;gap:5px;padding-right:19px}
.tray .lang{margin-left:1px;font-size:10px;width:20px;text-align:center}
.clock{text-align:center;line-height:15px;font-size:10px;margin-left:-2px;width:54px}
.note{margin-left:5px}
```
